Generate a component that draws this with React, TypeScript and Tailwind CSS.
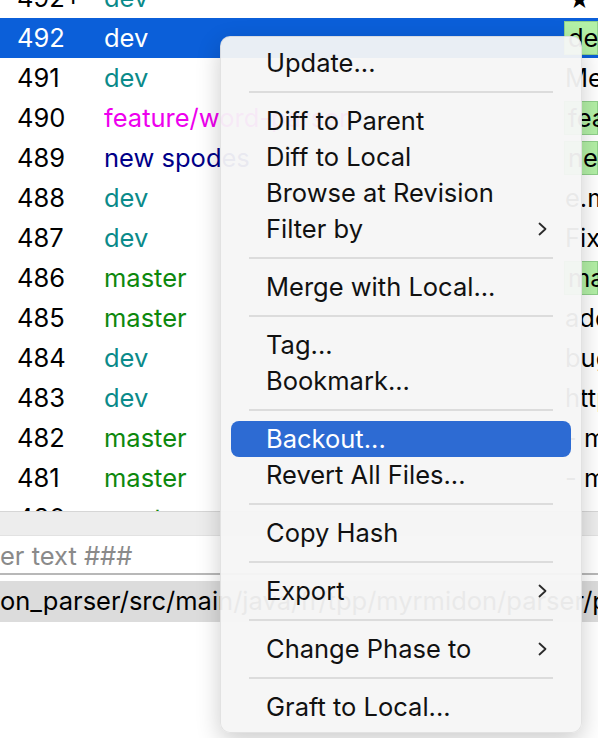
import React from "react";

type Row = { n: string; b: string; c: string; d: string; tag?: boolean; sel?: boolean };

const rows: Row[] = [
  { n: "492+", b: "dev", c: "text-[#0a8a8a]", d: "★" },
  { n: "492", b: "dev", c: "text-white", d: "dev", tag: true, sel: true },
  { n: "491", b: "dev", c: "text-[#0a8a8a]", d: "Merge" },
  { n: "490", b: "feature/word-parser", c: "text-[#ee00ee]", d: "feature", tag: true },
  { n: "489", b: "new spodes", c: "text-[#000088]", d: "new", tag: true },
  { n: "488", b: "dev", c: "text-[#0a8a8a]", d: "e.m" },
  { n: "487", b: "dev", c: "text-[#0a8a8a]", d: "Fix" },
  { n: "486", b: "master", c: "text-[#0d880d]", d: "master", tag: true },
  { n: "485", b: "master", c: "text-[#0d880d]", d: "add" },
  { n: "484", b: "dev", c: "text-[#0a8a8a]", d: "bug" },
  { n: "483", b: "dev", c: "text-[#0a8a8a]", d: "http" },
  { n: "482", b: "master", c: "text-[#0d880d]", d: "- m" },
  { n: "481", b: "master", c: "text-[#0d880d]", d: "- m" },
  { n: "480", b: "master", c: "text-[#0d880d]", d: "- m" },
];

type Item = { t: string; sub?: boolean; hi?: boolean } | "sep";

const items: Item[] = [
  { t: "Update..." },
  "sep",
  { t: "Diff to Parent" },
  { t: "Diff to Local" },
  { t: "Browse at Revision" },
  { t: "Filter by", sub: true },
  "sep",
  { t: "Merge with Local..." },
  "sep",
  { t: "Tag..." },
  { t: "Bookmark..." },
  "sep",
  { t: "Backout...", hi: true },
  { t: "Revert All Files..." },
  "sep",
  { t: "Copy Hash" },
  "sep",
  { t: "Export", sub: true },
  "sep",
  { t: "Change Phase to", sub: true },
  "sep",
  { t: "Graft to Local..." },
];

function Chevron() {
  return (
    <svg width="9" height="14" viewBox="0 0 9 14" className="shrink-0">
      <polyline points="1.5,1.5 7.5,7 1.5,12.5" fill="none" stroke="#2a2a2a" strokeWidth="1.8" strokeLinecap="round" strokeLinejoin="round" />
    </svg>
  );
}

export default function App() {
  return (
    <div
      className="relative w-[598px] h-[738px] overflow-hidden bg-white text-[25.5px] text-black"
      style={{ fontFamily: "Inter, 'Noto Sans', sans-serif" }}
    >
      {/* table */}
      <div className="h-[511px] overflow-hidden">
        <div className="-mt-[22px]">
          {rows.map((r, i) => (
            <div key={i} className={`flex h-[40px] items-center whitespace-nowrap ${r.sel ? "bg-[#0b5fd9]" : ""}`}>
              <div className={`w-[104px] shrink-0 pl-[17px] ${r.sel ? "text-white" : "text-black"}`}>{r.n}</div>
              <div className={`w-[460px] shrink-0 overflow-hidden ${r.c}`}>{r.b}</div>
              <div className="flex h-full flex-1 items-center overflow-hidden">
                {r.tag ? (
                  <div className="flex h-[34px] w-full items-center border border-[#8fd08a] bg-[#b3f0a6] pl-[3px] text-black">{r.d}</div>
                ) : r.d === "★" ? (
                  <div className="pl-[4px] pt-[4px] text-[22px] text-black">{r.d}</div>
                ) : (
                  <div className="pl-[1px] text-black">{r.d}</div>
                )}
              </div>
            </div>
          ))}
        </div>
      </div>

      {/* scrollbar band */}
      <div className="h-[24px] border-t border-[#d6d6d6] bg-[#ededed]" />

      {/* filter input */}
      <div className="flex h-[40px] items-center border-t border-[#e2e2e2] border-b-2 border-b-[#b8b8b8] text-[#8a8a8a] whitespace-nowrap pt-[4px]">
        <span>er text ###</span>
      </div>

      <div className="h-[6px] bg-white" />
      {/* path bar */}
      <div className="flex h-[41px] items-center bg-[#dcdcdc] whitespace-nowrap overflow-hidden">
        <span>on_parser/src/main/java/fr/tpp/myrmidon/parser/p</span>
      </div>

      {/* context menu */}
      <div className="absolute left-[220px] top-[36px] w-[362px] rounded-[10px] border border-[#00000014] bg-[#f6f6f6]/[0.95] pt-[8px] pb-[7px] shadow-[0_8px_24px_rgba(0,0,0,0.2)] text-[#111111]">
        {items.map((it, i) =>
          it === "sep" ? (
            <div key={i} className="flex h-[22px] items-center px-[28px]">
              <div className="h-[2px] w-full bg-[#dcdcdc]" />
            </div>
          ) : (
            <div
              key={i}
              className={`mx-[10px] flex h-[36px] items-center justify-between rounded-[8px] pl-[35px] pr-[24px] whitespace-nowrap ${
                it.hi ? "bg-[#2d6bd3] text-white" : ""
              }`}
            >
              <span>{it.t}</span>
              {it.sub ? <Chevron /> : null}
            </div>
          )
        )}
      </div>
    </div>
  );
}
